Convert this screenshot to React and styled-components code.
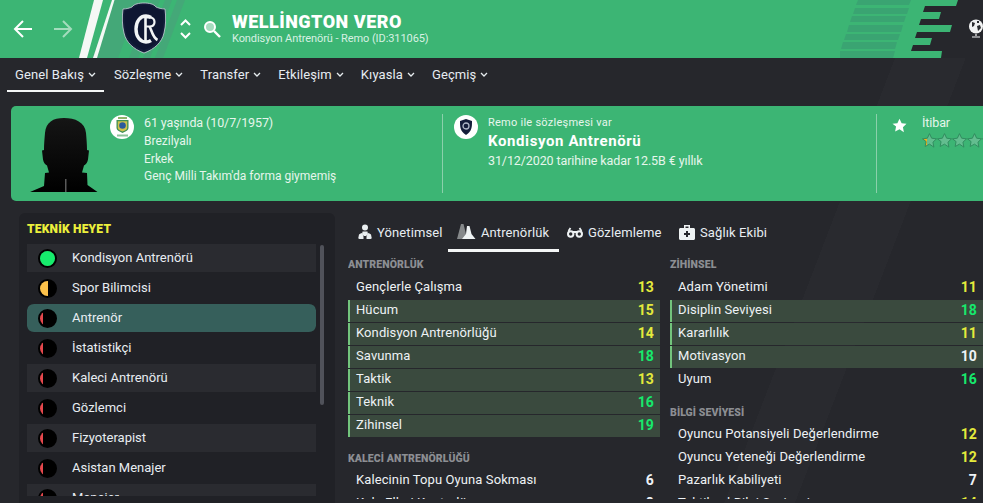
import styled, { createGlobalStyle } from "styled-components";

const GlobalStyle = createGlobalStyle`
    html, body {
        margin: 0;
        padding: 0;
        background: #26272c;
    }
    * {
        box-sizing: border-box;
    }
`

const GREEN = "#3cb574";

const staff = [
    { name: "Kondisyon Antrenörü", fill: 1, color: "#16ec6c" },
    { name: "Spor Bilimcisi", fill: 0.5, color: "#fcc14a" },
    { name: "Antrenör", fill: 0.2, color: "#e5484d", selected: true },
    { name: "İstatistikçi", fill: 0.2, color: "#e5484d" },
    { name: "Kaleci Antrenörü", fill: 0.2, color: "#e5484d" },
    { name: "Gözlemci", fill: 0.2, color: "#e5484d" },
    { name: "Fizyoterapist", fill: 0.2, color: "#e5484d" },
    { name: "Asistan Menajer", fill: 0.2, color: "#e5484d" },
    { name: "Menajer", fill: 0.2, color: "#e5484d" },
];

const coaching = [
    { name: "Gençlerle Çalışma", value: 13 },
    { name: "Hücum", value: 15, marked: true },
    { name: "Kondisyon Antrenörlüğü", value: 14, marked: true },
    { name: "Savunma", value: 18, marked: true },
    { name: "Taktik", value: 13, marked: true },
    { name: "Teknik", value: 16, marked: true },
    { name: "Zihinsel", value: 19, marked: true },
];
const keeper = [
    { name: "Kalecinin Topu Oyuna Sokması", value: 6 },
    { name: "Kale Elleri Kontrolü", value: 8 },
];
const mental = [
    { name: "Adam Yönetimi", value: 11 },
    { name: "Disiplin Seviyesi", value: 18, marked: true },
    { name: "Kararlılık", value: 11, marked: true },
    { name: "Motivasyon", value: 10, marked: true },
    { name: "Uyum", value: 16 },
];
const knowledge = [
    { name: "Oyuncu Potansiyeli Değerlendirme", value: 12 },
    { name: "Oyuncu Yeteneği Değerlendirme", value: 12 },
    { name: "Pazarlık Kabiliyeti", value: 7 },
    { name: "Taktiksel Bilgi Seviyesi", value: 14 },
];

const valueColor = (v) => {
    if (v >= 16) return "#16e96c";
    if (v >= 11) return "#e4ea3c";
    return "#eef2f6";
};

const Chevron = () => (
    <svg width="8" height="5" viewBox="0 0 8 5" fill="none">
        <path d="M1 1l3 3 3-3" stroke="#e6ecef" strokeWidth="1.3" />
    </svg>
);

const HeaderArt = () => (
    <svg width="983" height="58" viewBox="0 0 983 58">
        <polygon points="114,0 185,0 163,58 92,58" fill="#44a878" />
        <polygon points="140,0 151,0 129,58 118,58" fill="#3cb574" />
        <polygon points="160,0 165,0 143,58 138,58" fill="#3cb574" />
        <polygon points="172,0 177,0 155,58 150,58" fill="#3cb574" />
        <polygon points="94,0 103,0 87,58 79,58" fill="#f4f8f5" />
        <polygon points="112,0 114.500,0 97,58 93,58" fill="#f4f8f5" />
        <g fill="#3aa472">
            <polygon points="858,0 911,0 909,5 856,5" />
            <polygon points="855,8 909,8 907,14 853,14" />
            <polygon points="852,16 906,16 904,22 850,22" />
            <polygon points="849,25 903,25 901,32 847,32" />
            <polygon points="846,34 900,34 898,40 844,40" />
            <polygon points="843,42 897,42 895,49 841,49" />
            <polygon points="840,51 895,51 893,58 840,58" />
        </g>
        <polygon
            fill="#26272c"
            points="958,0 983,0 983,58 941,58 942,51 911,51 913,45 930,45 932,38 915,38 917,32 950,32 952,25 919,25 921,19 939,19 941,12 923,12 925,6 956,6"
        />
    </svg>
);

const Crest = () => (
    <svg width="44" height="52" viewBox="0 0 44 52">
        <path
            d="M22 1c5 0 10 1 12 4 2 1 6 2 9 2 1 8 1 16-1 24-2 9-9 16-20 20C11 47 4 40 2 31 0 23 0 15 1 7c3 0 7-1 9-2 2-3 7-4 12-4z"
            fill="#141d3a"
            stroke="#c9ced8"
            strokeWidth="0.8"
        />
        <path
            d="M22 3c5 0 9 1 11 3.500 2 1 5 2 8 2.500 1 7 0 15-1 21-2 8-8 14-18 18-10-4-16-10-18-18-1-6-2-14-1-21 3-.5 6-1.500 8-2.500 2-2.500 6-3.500 11-3.500z"
            fill="#0e1632"
        />
        <g fill="none" stroke="#f2f4f6">
            <path d="M29 15.500c-1.500-1-3-1.500-5-1.500-6 0-10 5.500-10 13s4 13 10 13c2 0 3.500-.5 5-1.500" strokeWidth="3.400" />
            <path d="M23.500 14v25" strokeWidth="2.600" />
            <path d="M23 15.500h4.500c3 0 5 1.800 5 4.500s-2 4.500-5 4.500H23" strokeWidth="2.200" />
            <path d="M27.500 24.500c2 3 3 11 8 13.500" strokeWidth="2.600" />
        </g>
    </svg>
);

const Silhouette = () => (
    <svg width="68" height="74" viewBox="0 0 68 74">
        <defs>
            <linearGradient id="sil" x1="0" y1="0" x2="0" y2="1">
                <stop offset="0" stopColor="#151515" />
                <stop offset="1" stopColor="#000" />
            </linearGradient>
        </defs>
        <path
            d="M34 0c11 0 21 4 22 15 .5 6 1 11 1 17l2 .5-1 9c-.5 3-2 5-4 6l-2 7 5 .5.5 12 10 7H0l14-6 1-13 4-.5-2-7c-2-1-3.500-3-4-6l-1-9 2-.5c0-6 .5-11 1-17C16 4 23 0 34 0z"
            fill="url(#sil)"
        />
        <rect x="35" y="61" width="1.500" height="13" fill="#5a5a5a" />
    </svg>
);

const BrazilBadge = () => (
    <svg width="15" height="20" viewBox="0 0 15 20">
        <path d="M3 0h9v2H3z" fill="#8fb56a" />
        <path d="M1.500 3h12v8c0 2-2.500 3.500-6 5-3.500-1.500-6-3-6-5z" fill="#3f8f55" />
        <path d="M2.800 4.200h9.400V11c0 1.500-2 2.500-4.700 3.500C5 13.500 2.800 12.500 2.800 11z" fill="#cfc24c" />
        <circle cx="7.500" cy="8.500" r="3.300" fill="#2a5a9c" />
        <rect x="2" y="17.500" width="11" height="2" fill="#8cc29a" />
    </svg>
);

const RemoBadge = () => (
    <svg width="14" height="16" viewBox="0 0 14 16">
        <path d="M7 0l6 2c0 6 0 10-6 14C1 12 1 8 1 2z" fill="#141d3a" />
        <circle cx="7" cy="7" r="3" fill="none" stroke="#aeb6c6" strokeWidth="1.300" />
    </svg>
);

const ManagerIcon = () => (
    <svg width="14" height="16" viewBox="0 0 14 16" fill="#e9eef0">
        <circle cx="7" cy="3.500" r="3" />
        <path d="M4.500 7.500h5l.5 3-2 1.500H6l-2-1.500z" />
        <path d="M1 10.500c1-1 2-1.500 3-1.500l1.500 3.500V15H1.500C.5 15 0 14 .5 13zM13 10.500c-1-1-2-1.500-3-1.500l-1.500 3.500V15h4c1 0 1.500-1 1-2z" />
    </svg>
);

const ConesIcon = () => (
    <svg width="19" height="16" viewBox="0 0 19 16">
        <path d="M4 0h2.500l3 12-3 3H0z" fill="#85888a" />
        <path d="M10 2h2.500l2 8 4 5H5l4-5z" fill="#eef2f3" />
    </svg>
);

const BinocularsIcon = () => (
    <svg width="16" height="11" viewBox="0 0 16 11" fill="none" stroke="#eef2f3" strokeWidth="2">
        <circle cx="3.700" cy="7" r="2.700" />
        <circle cx="12.300" cy="7" r="2.700" />
        <path d="M1.500 4l2-3M14.500 4l-2-3M6 5h4" strokeWidth="1.800" />
    </svg>
);

const MedicalIcon = () => (
    <svg width="16" height="15" viewBox="0 0 16 15">
        <path
            fillRule="evenodd"
            d="M5 0h6v3h3.500c.8 0 1.500.7 1.500 1.500v9c0 .8-.7 1.500-1.500 1.500h-13C.7 15 0 14.300 0 13.500v-9C0 3.700.7 3 1.500 3H5zM6.500 1.500V3h3V1.500zM7 6v2H5v2h2v2h2v-2h2V8H9V6z"
            fill="#eef2f3"
        />
    </svg>
);

const StarRow = () => (
    <StStars>
        {[0, 1, 2, 3, 4].map((i) => (
            <svg key={i} width="15" height="15" viewBox="0 0 24 24">
                <defs>
                    <linearGradient id={`half${i}`}>
                        <stop offset="0.35" stopColor={i === 0 ? "#f2b21c" : "#63bd8f"} />
                        <stop offset="0.35" stopColor="#63bd8f" />
                    </linearGradient>
                </defs>
                <path
                    d="M12 1l3.400 7.300 7.800 1-5.700 5.400 1.500 7.900L12 17.800l-7 3.800 1.500-7.900L.8 9.300l7.800-1z"
                    fill={`url(#half${i})`}
                    stroke="#2f8a5d"
                    strokeWidth="1.500"
                />
            </svg>
        ))}
    </StStars>
);

const AttributeGroup = ({ title, rows }) => (
    <StGroup>
        <StGroupTitle>{title}</StGroupTitle>
        {rows.map((row) => (
            <StAttribute key={row.name} $marked={row.marked}>
                <span>{row.name}</span>
                <StValue $color={valueColor(row.value)}>{row.value}</StValue>
            </StAttribute>
        ))}
    </StGroup>
);

const App = () => {
    return (
        <StPage>
            <GlobalStyle />
            <StHeader>
                <StHeaderArt><HeaderArt /></StHeaderArt>
                <StArrows>
                    <svg width="20" height="18" viewBox="0 0 20 18" fill="none" stroke="#fff" strokeWidth="2">
                        <path d="M10 1L2 9l8 8M2 9h17" />
                    </svg>
                    <svg width="20" height="18" viewBox="0 0 20 18" fill="none" stroke="#a4dcbd" strokeWidth="2">
                        <path d="M10 1l8 8-8 8M18 9H1" />
                    </svg>
                </StArrows>
                <StCrestBox><Crest /></StCrestBox>
                <StUpDown>
                    <svg width="11" height="7" viewBox="0 0 11 7" fill="none" stroke="#fff" strokeWidth="2">
                        <path d="M1 6l4.500-4.500L10 6" />
                    </svg>
                    <svg width="11" height="7" viewBox="0 0 11 7" fill="none" stroke="#fff" strokeWidth="2">
                        <path d="M1 1l4.500 4.500L10 1" />
                    </svg>
                </StUpDown>
                <StSearch>
                    <svg width="18" height="18" viewBox="0 0 18 18" fill="none">
                        <circle cx="7" cy="7" r="5" stroke="#fff" strokeWidth="2" fill="#a6dcbf" />
                        <path d="M11 11l6 6" stroke="#fff" strokeWidth="2.400" />
                    </svg>
                </StSearch>
                <StTitleBox>
                    <StName>WELLİNGTON VERO</StName>
                    <StSub>Kondisyon Antrenörü - Remo (ID:311065)</StSub>
                </StTitleBox>
                <StGlobe>
                    <svg width="16" height="20" viewBox="0 0 16 20">
                        <circle cx="8" cy="7.500" r="7" fill="#f2f3f3" />
                        <path d="M4 3l3 1-1 3-2 1zM9 7l3-1 1 3-3 3zM9 2h2v2H9z" fill="#2b2c2f" />
                        <path d="M8 15v2M4 18h8" stroke="#f2f3f3" strokeWidth="1.200" />
                    </svg>
                </StGlobe>
            </StHeader>

            <StNav>
                {["Genel Bakış", "Sözleşme", "Transfer", "Etkileşim", "Kıyasla", "Geçmiş"].map((item, i) => (
                    <StNavItem key={item} $active={i === 0}>
                        {item}
                        <Chevron />
                    </StNavItem>
                ))}
            </StNav>

            <StHero>
                <StPortrait><Silhouette /></StPortrait>
                <StHeroBlock $width="332px">
                    <StBadge><BrazilBadge /></StBadge>
                    <StHeroText>
                        <StHeroLead>61 yaşında (10/7/1957)</StHeroLead>
                        <StHeroLine>Brezilyalı</StHeroLine>
                        <StHeroLine>Erkek</StHeroLine>
                        <StHeroLine>Genç Milli Takım'da forma giymemiş</StHeroLine>
                    </StHeroText>
                </StHeroBlock>
                <StHeroBlock $width="434px" $divided>
                    <StBadge><RemoBadge /></StBadge>
                    <StHeroText>
                        <StHeroSmall>Remo ile sözleşmesi var</StHeroSmall>
                        <StHeroStrong>Kondisyon Antrenörü</StHeroStrong>
                        <StHeroLead>31/12/2020 tarihine kadar 12.5B € yıllık</StHeroLead>
                    </StHeroText>
                </StHeroBlock>
                <StHeroBlock $divided $wide>
                    <StBigStar>
                        <svg width="15" height="15" viewBox="0 0 24 24" fill="#fff">
                            <path d="M12 1l3.400 7.300 7.800 1-5.700 5.400 1.500 7.900L12 17.800l-7 3.800 1.500-7.900L.8 9.300l7.800-1z" />
                        </svg>
                    </StBigStar>
                    <StHeroText>
                        <StHeroLead>İtibar</StHeroLead>
                        <StarRow />
                    </StHeroText>
                </StHeroBlock>
            </StHero>

            <StBody>
                <StSidePanel>
                    <StPanelTitle>TEKNİK HEYET</StPanelTitle>
                    <StStaffArea>
                        <StStaffList>
                            {staff.map((person, i) => (
                                <StStaffRow key={person.name} $odd={i % 2 === 0} $selected={person.selected}>
                                    <StStaffDot>
                                        <StDotFill $fill={person.fill} $color={person.color} />
                                    </StStaffDot>
                                    <StStaffName>{person.name}</StStaffName>
                                </StStaffRow>
                            ))}
                        </StStaffList>
                        <StScrollBar />
                    </StStaffArea>
                </StSidePanel>

                <StContent>
                    <StTabs>
                        <StTab $width="100px" $pad="10px"><ManagerIcon />Yönetimsel</StTab>
                        <StTab $width="111px" $pad="9px" $active><ConesIcon />Antrenörlük</StTab>
                        <StTab $width="111px" $pad="8px"><BinocularsIcon />Gözlemleme</StTab>
                        <StTab $width="110px" $pad="9px"><MedicalIcon />Sağlık Ekibi</StTab>
                    </StTabs>
                    <StColumns>
                        <StColumn>
                            <AttributeGroup title="ANTRENÖRLÜK" rows={coaching} />
                            <AttributeGroup title="KALECİ ANTRENÖRLÜĞÜ" rows={keeper} />
                        </StColumn>
                        <StColumn>
                            <AttributeGroup title="ZİHİNSEL" rows={mental} />
                            <AttributeGroup title="BİLGİ SEVİYESİ" rows={knowledge} />
                        </StColumn>
                    </StColumns>
                </StContent>
            </StBody>
        </StPage>
    );
};

export default App;

const StPage = styled.main`
    display: flex;
    flex-direction: column;
    position: relative;
    width: 983px;
    height: 503px;
    overflow: hidden;
    background: linear-gradient(111deg, transparent 78%, #292a2f 78%, #292a2f 84%, transparent 84%), #26272c;
    color: #eef2f5;
    font-family: "Roboto", "Liberation Sans", sans-serif;
    font-size: 13px;
`
const StHeader = styled.header`
    position: relative;
    display: flex;
    align-items: center;
    flex: 0 0 58px;
    background: ${GREEN};
`
const StHeaderArt = styled.div`
    position: absolute;
    inset: 0;
    line-height: 0;
`
const StArrows = styled.div`
    position: relative;
    display: flex;
    gap: 20px;
    margin-left: 13px;
`
const StCrestBox = styled.div`
    position: relative;
    display: flex;
    margin-left: 49px;
    margin-top: -2px;
`
const StUpDown = styled.div`
    position: relative;
    display: flex;
    flex-direction: column;
    gap: 6px;
    margin-left: 14px;
`
const StSearch = styled.div`
    position: relative;
    display: flex;
    margin-left: 12px;
`
const StTitleBox = styled.div`
    position: relative;
    display: flex;
    flex-direction: column;
    margin-left: 11px;
    margin-top: -1px;
`
const StName = styled.div`
    font-size: 18px;
    font-weight: 900;
    line-height: 20px;
    letter-spacing: 0.5px;
    color: #fff;
`
const StSub = styled.div`
    font-size: 11px;
    line-height: 14px;
    letter-spacing: -0.08px;
    color: #d8f1e3;
`
const StGlobe = styled.div`
    position: absolute;
    left: 968px;
    top: 19px;
    line-height: 0;
`
const StNav = styled.nav`
    display: flex;
    flex: 0 0 34px;
    margin: 0 0 0 7px;
`
const StNavItem = styled.div`
    display: flex;
    align-items: center;
    gap: 4px;
    height: 34px;
    padding: 0 8px;
    margin-right: ${({ $active }) => ($active ? "2px" : "1px")};
    border-bottom: 2px solid ${({ $active }) => ($active ? "#f4f6f6" : "transparent")};
    font-size: 13px;
    letter-spacing: 0.1px;
    color: #e6ecf2;
`
const StHero = styled.section`
    display: flex;
    flex: 0 0 95px;
    margin: 14px 0 0 11px;
    border-radius: 5px 0 0 5px;
    background: ${GREEN};
`
const StPortrait = styled.div`
    flex: 0 0 99px;
    padding: 12px 0 0 19px;
    line-height: 0;
`
const StHeroBlock = styled.div`
    display: flex;
    flex: ${({ $width }) => ($width ? `0 0 ${$width}` : "1")};
    gap: ${({ $wide }) => ($wide ? "15px" : "10px")};
    margin: 8px 0;
    padding-left: ${({ $wide, $divided }) => ($wide ? "15px" : $divided ? "11px" : "0")};
    border-left: ${({ $divided }) => ($divided ? "1px solid #8bd0ab" : "none")};
`
const StBadge = styled.div`
    display: flex;
    flex: 0 0 24px;
    align-items: center;
    justify-content: center;
    height: 24px;
    margin-top: 1px;
    border-radius: 50%;
    background: #fff;
`
const StHeroText = styled.div`
    display: flex;
    flex-direction: column;
`
const StHeroLead = styled.div`
    font-size: 12.500px;
    line-height: 17px;
    letter-spacing: -0.1px;
    color: #e6f6ec;
`
const StHeroLine = styled.div`
    font-size: 12px;
    line-height: 17px;
    margin-top: 1px;
    &:nth-of-type(2) {
        margin-top: 2px;
    }
    &:nth-of-type(4) {
        margin-top: 0;
    }
    color: #e6f6ec;
`
const StHeroSmall = styled.div`
    font-size: 11px;
    line-height: 16px;
    padding-top: 1px;
    box-sizing: content-box;
    letter-spacing: 0.25px;
    color: #e6f6ec;
`
const StHeroStrong = styled.div`
    font-size: 15px;
    font-weight: 700;
    line-height: 21px;
    letter-spacing: 0.6px;
    color: #fff;
`
const StBigStar = styled.div`
    flex: 0 0 15px;
    margin-top: 4px;
`
const StStars = styled.div`
    display: flex;
    line-height: 0;
    margin-top: 2px;
`
const StBody = styled.div`
    display: flex;
    flex: 1;
    min-height: 0;
    margin-top: 12px;
`
const StSidePanel = styled.aside`
    flex: 0 0 316px;
    margin-left: 19px;
    padding: 9px 0 0 8px;
    border-radius: 6px 6px 0 0;
    background: #202126;
`
const StPanelTitle = styled.h2`
    margin: 0;
    height: 21px;
    font-size: 12px;
    font-weight: 900;
    line-height: 15px;
    letter-spacing: 0.2px;
    color: #ecf03c;
`
const StStaffArea = styled.div`
    position: relative;
    display: flex;
    gap: 4px;
    height: 253px;
    overflow: hidden;
`
const StStaffList = styled.ul`
    flex: 0 0 289px;
    margin: 0;
    padding: 0;
    list-style: none;
`
const StStaffRow = styled.li`
    display: flex;
    align-items: center;
    gap: 15px;
    height: 30px;
    padding-left: 11px;
    color: #e8edf2;
    background: ${({ $selected, $odd }) => ($selected ? "#365f5b" : $odd ? "#2a2b30" : "transparent")};
    background-clip: padding-box;
    border-block: 1px solid transparent;
    border-radius: ${({ $selected }) => ($selected ? "7px" : "0")};
`
const StStaffDot = styled.span`
    display: block;
    flex: 0 0 19px;
    height: 19px;
    overflow: hidden;
    border: 2px solid #000;
    border-radius: 50%;
    background: #000;
`
const StDotFill = styled.span`
    display: block;
    width: ${({ $fill }) => $fill * 100}%;
    height: 100%;
    background: ${({ $color }) => $color};
`
const StStaffName = styled.span`
    font-size: 13px;
    margin-top: -2px;
`
const StScrollBar = styled.div`
    flex: 0 0 4px;
    height: 160px;
    margin-top: 2px;
    border-radius: 2px;
    background: #50525a;
`
const StContent = styled.div`
    flex: 1;
    min-width: 0;
    padding-left: 13px;
`
const StTabs = styled.div`
    display: flex;
    height: 40px;
`
const StTab = styled.div`
    display: flex;
    flex: 0 0 ${({ $width }) => $width};
    align-items: center;
    gap: 5px;
    height: 39px;
    padding: 2px 0 0 ${({ $pad }) => $pad};
    font-size: 13px;
    letter-spacing: 0.1px;
    color: #e8edf2;
    border-bottom: 3px solid ${({ $active }) => ($active ? "#f4f6f6" : "transparent")};
`
const StColumns = styled.div`
    display: grid;
    grid-template-columns: 312px 313px;
    gap: 10px;
    height: 246px;
    overflow: hidden;
`
const StColumn = styled.div`
    display: flex;
    flex-direction: column;
    gap: 10px;
`
const StGroup = styled.section`
    display: flex;
    flex-direction: column;
    gap: 1px;
    & + & h3 {
        height: 22px;
    }
`
const StGroupTitle = styled.h3`
    margin: 0;
    padding-top: 5px;
    height: 23px;
    font-size: 10.500px;
    font-weight: 900;
    line-height: 14px;
    letter-spacing: 0.1px;
    color: #8c8e93;
`
const StAttribute = styled.div`
    display: flex;
    align-items: center;
    justify-content: space-between;
    height: 22px;
    padding: 0 6px 3px 6px;
    border-left: 2px solid ${({ $marked }) => ($marked ? "#72c47c" : "transparent")};
    background: ${({ $marked }) => ($marked ? "#3a4a3e" : "transparent")};
    font-size: 13px;
    letter-spacing: 0.1px;
    color: #eef2f5;
`
const StValue = styled.span`
    font-size: 14px;
    font-weight: 700;
    color: ${({ $color }) => $color};
`
